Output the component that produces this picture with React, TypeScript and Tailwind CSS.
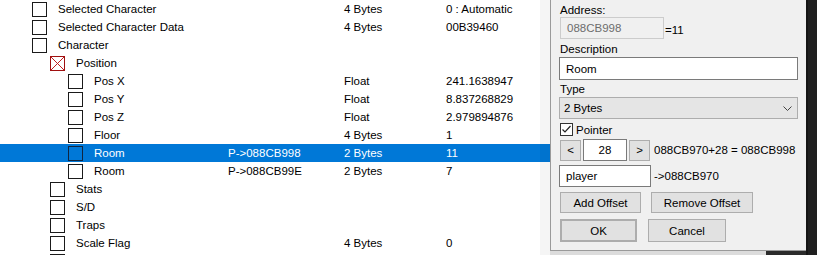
import * as React from 'react';

/**
 * Memory watch list with the "Change address" dialog open on top.
 */

interface Row {
  level: number;
  name: string;
  addr?: string;
  type?: string;
  value?: string;
  crossed?: boolean;
  selected?: boolean;
}

const rows: Row[] = [
  { level: 0, name: 'Selected Character', type: '4 Bytes', value: '0 : Automatic' },
  { level: 0, name: 'Selected Character Data', type: '4 Bytes', value: '00B39460' },
  { level: 0, name: 'Character' },
  { level: 1, name: 'Position', crossed: true },
  { level: 2, name: 'Pos X', type: 'Float', value: '241.1638947' },
  { level: 2, name: 'Pos Y', type: 'Float', value: '8.837268829' },
  { level: 2, name: 'Pos Z', type: 'Float', value: '2.979894876' },
  { level: 2, name: 'Floor', type: '4 Bytes', value: '1' },
  { level: 2, name: 'Room', addr: 'P->088CB998', type: '2 Bytes', value: '11', selected: true },
  { level: 2, name: 'Room', addr: 'P->088CB99E', type: '2 Bytes', value: '7' },
  { level: 1, name: 'Stats' },
  { level: 1, name: 'S/D' },
  { level: 1, name: 'Traps' },
  { level: 1, name: 'Scale Flag', type: '4 Bytes', value: '0' },
  { level: 1, name: '' },
];

const indent = ['ml-[32px]', 'ml-[50px]', 'ml-[68px]'];

function TreeRow({ row }: { row: Row }) {
  return (
    <div
      className={
        'flex h-[18px] shrink-0 items-center ' +
        (row.selected ? 'bg-[#0078d7] text-white' : 'text-black')
      }
    >
      <div className="flex w-[228px] shrink-0 items-center">
        {row.crossed ? (
          <svg className={'h-[15px] w-[15px] shrink-0 ' + indent[row.level]} viewBox="0 0 15 15">
            <rect x="0.5" y="0.5" width="14" height="14" fill="white" stroke="#a01010" />
            <path d="M1 1 L14 14 M14 1 L1 14" stroke="#c02020" strokeWidth="1" />
          </svg>
        ) : (
          <span
            className={
              'h-[15px] w-[15px] shrink-0 border ' +
              indent[row.level] +
              (row.selected ? ' border-[#10253f]' : ' border-[#1a1a1a] bg-white')
            }
          />
        )}
        <span className="ml-[11px] whitespace-nowrap">{row.name}</span>
      </div>
      <div className="w-[116px] shrink-0 whitespace-nowrap">{row.addr}</div>
      <div className="w-[102px] shrink-0 whitespace-nowrap">{row.type}</div>
      <div className="whitespace-nowrap">{row.value}</div>
    </div>
  );
}

function Button({ className, children }: { className: string; children: React.ReactNode }) {
  return (
    <div
      className={
        'flex shrink-0 items-center justify-center border border-[#adadad] bg-[#e1e1e1] text-black ' +
        className
      }
    >
      {children}
    </div>
  );
}

export default function App() {
  return (
    <div
      className="relative flex h-[255px] w-[817px] overflow-hidden bg-white text-[11.5px] leading-[16px]"
      style={{ fontFamily: '"Liberation Sans", Arial, sans-serif' }}
    >
      {/* Watch list */}
      <div className="relative flex w-[550px] shrink-0 flex-col">
        {rows.map((row, i) => (
          <TreeRow key={i} row={row} />
        ))}
        {/* dialog drop shadow */}
        <div className="pointer-events-none absolute right-0 top-0 h-full w-[10px] bg-black/[0.04]" />
      </div>

      {/* Change address dialog */}
      <div className="flex w-[256px] shrink-0 flex-col">
        <div className="flex h-[251px] flex-col border-b border-l border-[#9a9a9a] bg-[#f0f0f0] pl-[8px]">
          <div className="mt-[2px] h-[15px] pl-px">Address:</div>
          <div className="flex h-[22px] items-end">
            <div className="ml-px flex h-[22px] w-[104px] items-center border border-[#cccccc] pl-[6px] text-[#6d6d6d]">
              088CB998
            </div>
            <span className="mb-[1px] ml-px">=11</span>
          </div>
          <div className="mt-[2px] h-[16px] pl-px">Description</div>
          <div className="flex h-[23px] w-[239px] items-center border border-[#7a7a7a] bg-white pl-[6px]">
            Room
          </div>
          <div className="mt-px h-[16px] pl-px">Type</div>
          <div className="flex h-[22px] w-[239px] items-center justify-between border border-[#adadad] bg-[#e5e5e5] pl-[4px] pr-[5px]">
            <span>2 Bytes</span>
            <svg width="9" height="5" viewBox="0 0 9 5">
              <path d="M0.5 0.5 L4.5 4.5 L8.5 0.5" fill="none" stroke="#444" strokeWidth="1" />
            </svg>
          </div>
          <div className="mt-[3px] flex h-[15px] items-center pl-px">
            <svg width="13" height="13" viewBox="0 0 13 13" className="shrink-0">
              <rect x="0.5" y="0.5" width="12" height="12" fill="white" stroke="#333" />
              <path d="M2.5 6.5 L5 9 L10.5 3" fill="none" stroke="#222" strokeWidth="1.2" />
            </svg>
            <span className="ml-[3px]">Pointer</span>
          </div>
          <div className="mt-[2px] flex h-[22px] items-center pl-px">
            <Button className="h-[21px] w-[21px]">&lt;</Button>
            <div className="ml-[2px] flex h-[22px] w-[44px] items-center justify-center border border-[#7a7a7a] bg-white">
              28
            </div>
            <Button className="ml-[2px] h-[21px] w-[21px]">&gt;</Button>
            <span className="ml-[4px] whitespace-nowrap">088CB970+28 = 088CB998</span>
          </div>
          <div className="mt-[4px] flex h-[22px] items-center">
            <div className="flex h-[22px] w-[92px] items-center border border-[#7a7a7a] bg-white pl-[6px]">
              player
            </div>
            <span className="ml-[3px] whitespace-nowrap">-&gt;088CB970</span>
          </div>
          <div className="mt-[5px] flex h-[21px] pl-px">
            <Button className="h-[21px] w-[81px]">Add Offset</Button>
            <Button className="ml-[10px] h-[21px] w-[102px]">Remove Offset</Button>
          </div>
          <div className="mt-[6px] flex h-[23px] pl-px">
            <Button className="h-[23px] w-[77px] border-2 border-[#0078d7]">OK</Button>
            <Button className="ml-[11px] h-[23px] w-[78px]">Cancel</Button>
          </div>
        </div>
        <div className="flex flex-1">
          <div className="w-[216px] bg-[#dcdcdc]" />
          <div className="flex-1 bg-[#2b2b2b]" />
        </div>
      </div>

      {/* Desktop behind */}
      <div className="flex-1 border-l-2 border-[#151515] bg-[#1f1f1f]" />
    </div>
  );
}
